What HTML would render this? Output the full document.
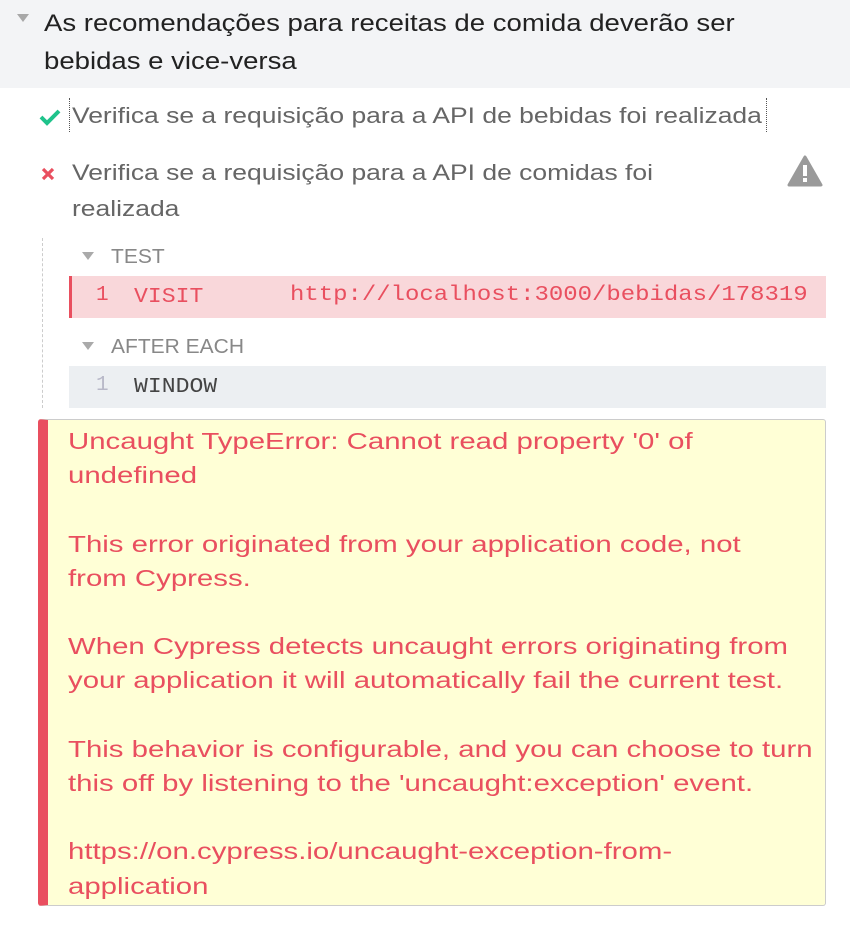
<!DOCTYPE html>
<html><head><meta charset="utf-8"><style>
body{margin:0;width:850px;height:926px;background:#fff;font-family:"Liberation Sans",sans-serif;overflow:hidden;position:relative}
.a{position:absolute;white-space:nowrap;transform-origin:0 0}
.hdr{position:absolute;left:0;top:0;width:850px;height:88px;background:#f3f4f6}
.tri{position:absolute;width:0;height:0;border-left:6px solid transparent;border-right:6px solid transparent;border-top:8px solid #a8a8a8}
.m{font-family:'Liberation Mono',monospace;font-size:21px;line-height:28px}
</style></head><body>
<div class="hdr"></div>
<div class="tri" style="left:17px;top:14px"></div>
<div class="a" style="left:44px;top:5px;font-size:24px;line-height:38px;color:#222;transform:scaleX(1.148)">As recomendações para receitas de comida deverão ser<br>bebidas e vice-versa</div>

<svg class="a" style="left:38px;top:108px" width="24" height="18" viewBox="0 0 24 18"><path d="M3 9 L9 15 L21 3" stroke="#1fc38b" stroke-width="4" fill="none"/></svg>
<div class="a" style="left:69px;top:98px;width:696px;height:34px;border-left:1px dotted #555;border-right:1px dotted #555"></div>
<div class="a" style="left:72px;top:99px;font-size:22.5px;line-height:34px;color:#666;transform:scaleX(1.176)">Verifica se a requisição para a API de bebidas foi realizada</div>

<svg class="a" style="left:40px;top:166px" width="16" height="16" viewBox="0 0 16 16"><path d="M3 3 L13 13 M13 3 L3 13" stroke="#e94f5f" stroke-width="3.2"/></svg>
<div class="a" style="left:72px;top:155px;font-size:22.5px;line-height:36px;color:#666;transform:scaleX(1.176)">Verifica se a requisição para a API de comidas foi<br>realizada</div>
<svg class="a" style="left:787px;top:155px" width="36" height="32" viewBox="0 0 36 32"><path d="M18 2 L34 30 L2 30 Z" fill="#9a9a9a" stroke="#9a9a9a" stroke-width="3" stroke-linejoin="round"/><rect x="16" y="10" width="4" height="11" fill="#fff"/><rect x="16" y="23" width="4" height="4" fill="#fff"/></svg>

<div class="a" style="left:42px;top:238px;height:170px;border-left:1px dashed #ccc"></div>
<div class="tri" style="left:82px;top:252px;border-top-color:#aaa"></div>
<div class="a" style="left:111px;top:244px;font-size:20px;line-height:26px;color:#888;transform:scaleX(1.05)">TEST</div>
<div class="a" style="left:69px;top:276px;width:757px;height:42px;background:#f9d7da;border-left:3px solid #e94f5f;box-sizing:border-box"></div>
<div class="a m" style="left:96px;top:282px;color:#e94f5f">1</div>
<div class="a m" style="left:134px;top:284px;color:#e94f5f;transform:scaleX(1.1)">VISIT</div>
<div class="a m" style="left:290px;top:282px;color:#e94f5f;transform:scaleX(1.141)">http://localhost:3000/bebidas/178319</div>
<div class="tri" style="left:82px;top:342px;border-top-color:#aaa"></div>
<div class="a" style="left:111px;top:334px;font-size:20px;line-height:26px;color:#888;transform:scaleX(1.05)">AFTER EACH</div>
<div class="a" style="left:69px;top:366px;width:757px;height:42px;background:#eceff2"></div>
<div class="a m" style="left:96px;top:372px;color:#b8b8c8">1</div>
<div class="a m" style="left:134px;top:374px;color:#444;transform:scaleX(1.1)">WINDOW</div>

<div class="a" style="left:38px;top:419px;width:788px;height:487px;background:#ffffd6;border:1px solid #ccc;border-left:10px solid #e94f5f;border-radius:3px;box-sizing:border-box"></div>
<div class="a" style="left:68px;top:424px;font-size:23.5px;line-height:34.2px;color:#e94f5f;transform:scaleX(1.25)">Uncaught TypeError: Cannot read property '0' of<br>undefined<br><br>This error originated from your application code, not<br>from Cypress.<br><br>When Cypress detects uncaught errors originating from<br>your application it will automatically fail the current test.<br><br>This behavior is configurable, and you can choose to turn<br>this off by listening to the 'uncaught:exception' event.<br><br>https://on.cypress.io/uncaught-exception-from-<br>application</div>
</body></html>
